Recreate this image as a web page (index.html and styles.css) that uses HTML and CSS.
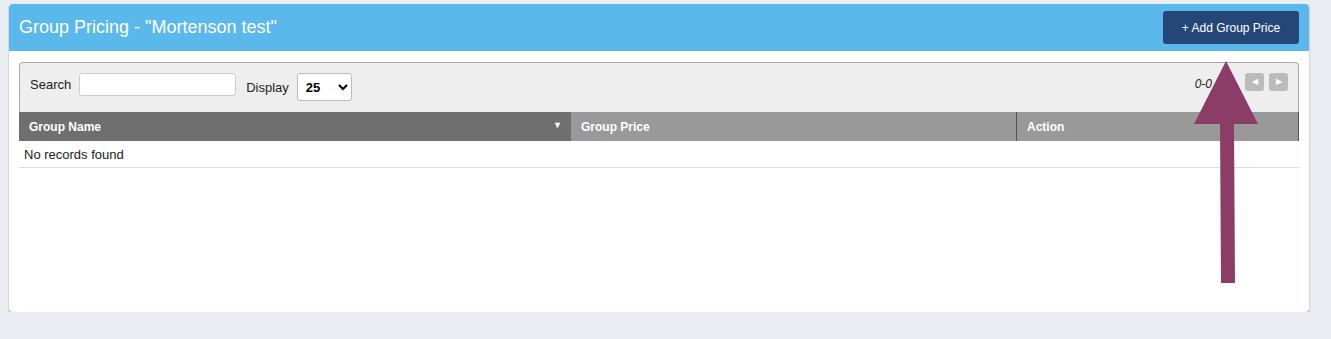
FILE: index.html
```html
<!DOCTYPE html>
<html lang="en">
<head>
    <meta charset="UTF-8">
    <meta name="viewport" content="width=device-width, initial-scale=1.0">
    <title>Group Pricing</title>
    <link rel="stylesheet" href="styles.css">
</head>
<body>

    <div class="card">
        <div class="card-header">
            <h2 class="title">Group Pricing - "Mortenson test"</h2>
            <button class="add-btn">+ Add Group Price</button>
        </div>

        <div class="card-body">
            <div class="toolbar">
                <label class="field">Search <input type="text" class="search"></label>
                <label class="field">Display
                    <select class="display">
                        <option>25</option>
                        <option>50</option>
                        <option>100</option>
                    </select>
                </label>
                <div class="pager">
                    <span class="count">0-0</span>
                    <button class="page-btn">&#9664;</button>
                    <button class="page-btn">&#9654;</button>
                </div>
            </div>

            <table class="grid">
                <thead>
                    <tr>
                        <th class="col-name sorted">Group Name <span class="sort">&#9660;</span></th>
                        <th class="col-price">Group Price</th>
                        <th class="col-action">Action</th>
                    </tr>
                </thead>
                <tbody>
                    <tr>
                        <td colspan="3">No records found</td>
                    </tr>
                </tbody>
            </table>
        </div>

        <svg class="arrow" width="66" height="224" viewBox="0 0 66 224">
            <polygon points="32,0 64,63 40,63 41,222 27,222 26,63 0,63" fill="#8b3d68"/>
        </svg>
    </div>

</body>
</html>
```

FILE: styles.css
```css
body {
    margin: 0;
    padding: 4px 0 0 9px;
    background: #e9edf1;
    font-family: "Liberation Sans", Arial, sans-serif;
}
.card {
    position: relative;
    width: 1300px;
    height: 308px;
    background: #fff;
    border-radius: 4px;
    box-shadow: 0 1px 2px rgba(0, 0, 0, 0.35);
    overflow: hidden;
}
.card-header {
    display: flex;
    align-items: center;
    justify-content: space-between;
    height: 47px;
    padding: 0 10px;
    background: #5ab9ea;
}
.title {
    margin: 0;
    font-size: 18px;
    font-weight: normal;
    color: #fff;
}
.add-btn {
    width: 136px;
    height: 33px;
    border: none;
    border-radius: 3px;
    background: #244777;
    color: #fff;
    font-family: inherit;
    font-size: 12px;
    cursor: pointer;
}
.card-body {
    padding: 11px 10px;
}
.toolbar {
    display: flex;
    align-items: flex-start;
    height: 39px;
    padding: 10px 10px 0;
    background: #eeeeee;
    border: 1px solid #aaa;
    border-bottom: none;
    border-radius: 4px 4px 0 0;
    font-size: 13px;
    color: #222;
}
.field {
    display: flex;
    align-items: baseline;
    gap: 8px;
    margin-right: 10px;
}
.search {
    width: 149px;
    height: 17px;
    padding: 2px 3px;
    border: 1px solid #ccc;
    border-radius: 3px;
}
.display {
    width: 55px;
    height: 28px;
    padding: 0 4px;
    border: 1px solid #bbb;
    border-radius: 3px;
    background: #fff;
    font-family: inherit;
    font-size: 13px;
    font-weight: bold;
}
.pager {
    display: flex;
    align-items: flex-start;
    margin-left: auto;
}
.count {
    margin: 2px 28px 0 0;
    font-size: 12px;
    font-style: italic;
    line-height: 18px;
}
.page-btn {
    width: 19px;
    height: 18px;
    margin-left: 5px;
    padding: 0;
    border: none;
    border-radius: 3px;
    background: #bbb;
    color: #fff;
    font-size: 8px;
    line-height: 18px;
}
.grid {
    width: 100%;
    border-collapse: collapse;
    font-size: 13px;
}
.grid th {
    height: 29px;
    padding: 0 10px;
    text-align: left;
    font-size: 12px;
    font-weight: bold;
    color: #fff;
    background: #999;
}
.grid th.sorted {
    background: #6f6f6f;
}
.col-name {
    width: 532px;
}
.col-price {
    width: 425px;
}
.col-action {
    border-left: 1px solid #555;
    border-right: 1px solid #555;
}
.sort {
    float: right;
    font-size: 9px;
    margin-right: -1px;
}
.grid td {
    height: 26px;
    padding: 0 5px;
    color: #222;
    border-bottom: 1px solid #ddd;
}
.arrow {
    position: absolute;
    left: 1185px;
    top: 57px;
}
```
